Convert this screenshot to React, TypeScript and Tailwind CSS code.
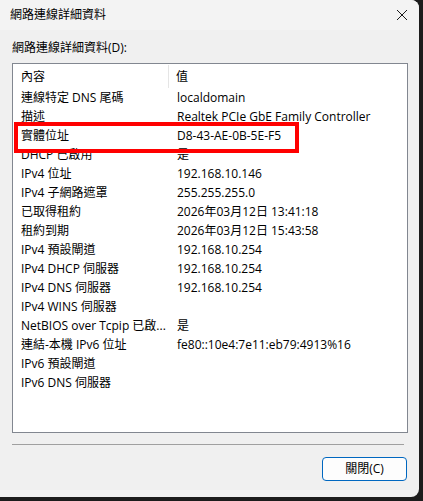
import React from 'react'

const rows: [string, string][] = [
  ['連線特定 DNS 尾碼', 'localdomain'],
  ['描述', 'Realtek PCIe GbE Family Controller'],
  ['實體位址', 'D8-43-AE-0B-5E-F5'],
  ['DHCP 已啟用', '是'],
  ['IPv4 位址', '192.168.10.146'],
  ['IPv4 子網路遮罩', '255.255.255.0'],
  ['已取得租約', '2026年03月12日 13:41:18'],
  ['租約到期', '2026年03月12日 15:43:58'],
  ['IPv4 預設閘道', '192.168.10.254'],
  ['IPv4 DHCP 伺服器', '192.168.10.254'],
  ['IPv4 DNS 伺服器', '192.168.10.254'],
  ['IPv4 WINS 伺服器', ''],
  ['NetBIOS over Tcpip 已啟...', '是'],
  ['連結-本機 IPv6 位址', 'fe80::10e4:7e11:eb79:4913%16'],
  ['IPv6 預設閘道', ''],
  ['IPv6 DNS 伺服器', ''],
]

export default function App() {
  return (
    <div
      className="w-[423px] h-[501px] bg-[#1c1c1c] text-[12px] text-black overflow-hidden"
      style={{ fontFamily: '"Open Sans", "Noto Sans CJK TC", sans-serif' }}
    >
      <div className="relative w-[419px] h-[497px] bg-[#f0f0f0] rounded-r-[8px] overflow-hidden flex flex-col">
        {/* title bar */}
        <div className="h-[30px] bg-[#f3f3f3] flex items-center justify-between pl-[10px] pr-[8px] shrink-0">
          <span className="leading-none">網路連線詳細資料</span>
          <svg width="12" height="12" viewBox="0 0 12 12" className="mr-[3px]">
            <path d="M1 1 L11 11 M11 1 L1 11" stroke="#1a1a1a" strokeWidth="1" />
          </svg>
        </div>

        <div className="px-[12px] pt-[12px]">
          <div className="leading-none h-[21px]">網路連線詳細資料(D):</div>

          {/* list box */}
          <div className="relative w-[396px] h-[370px] bg-white border border-[#828790]">
            <div className="flex h-[24px] items-center pt-[1px]">
              <div className="w-[156px] h-full flex items-center pl-[8px] border-r border-[#e5e5e5]">內容</div>
              <div className="pl-[7px]">值</div>
            </div>
            <div>
              {rows.map(([k, v]) => (
                <div key={k} className="flex h-[19px] items-center whitespace-nowrap pt-[1px]">
                  <div className="w-[157px] pl-[8px] overflow-hidden">{k}</div>
                  <div className="pl-[7px]">{v}</div>
                </div>
              ))}
            </div>
            {/* red highlight */}
            <div className="absolute left-[1px] top-[58px] w-[285px] h-[31px] border-[4px] border-[#ff0000]" />
          </div>

          <div className="mt-[11px] mr-[3px] h-px bg-[#a0a0a0]" />

          <div className="flex justify-end mt-[12px]">
            <button className="w-[85px] h-[24px] rounded-[4px] border border-[#0067c0] bg-[#fdfdfd] flex items-center justify-center leading-none">
              關閉(C)
            </button>
          </div>
        </div>
      </div>
    </div>
  )
}
